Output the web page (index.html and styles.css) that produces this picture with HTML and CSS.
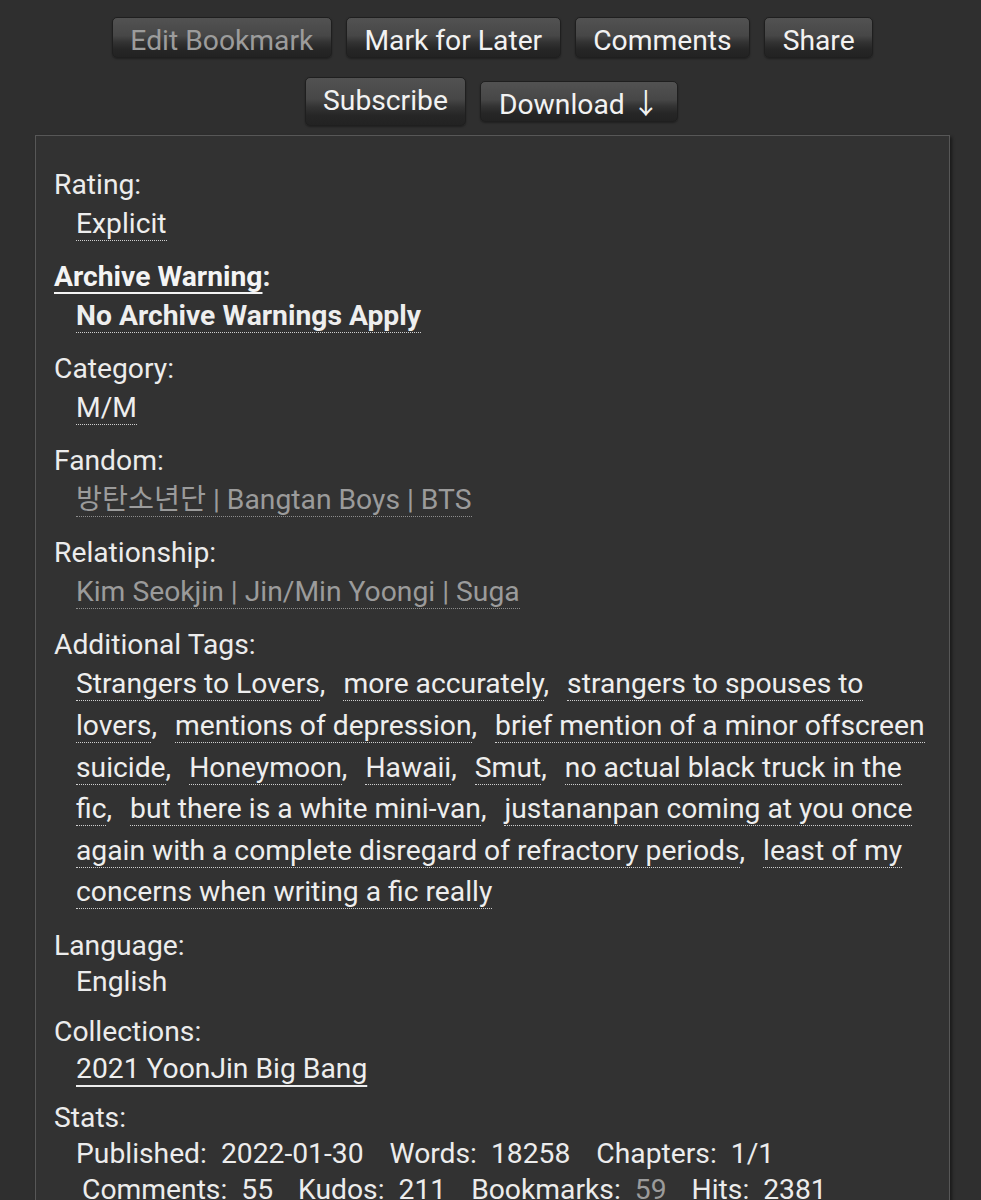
FILE: index.html
```html
<!DOCTYPE html>
<html lang="en">
<head>
<meta charset="utf-8">
<title>Work meta</title>
<link rel="stylesheet" href="styles.css">
</head>
<body>
<div class="page">
  <ul class="actions row-one">
    <li><a class="btn btn-muted">Edit Bookmark</a></li>
    <li><a class="btn">Mark for Later</a></li>
    <li><a class="btn">Comments</a></li>
    <li><a class="btn">Share</a></li>
  </ul>
  <ul class="actions row-two">
    <li><a class="btn btn-tall">Subscribe</a></li>
    <li><a class="btn">Download ↓</a></li>
  </ul>

  <div class="meta">
    <dl class="meta-list">
      <dt>Rating:</dt>
      <dd class="tagline"><ul class="tags"><li><a class="tag">Explicit</a></li></ul></dd>

      <dt class="strong"><a class="heading-link">Archive Warning</a>:</dt>
      <dd class="tagline strong"><ul class="tags"><li><a class="tag">No Archive Warnings Apply</a></li></ul></dd>

      <dt>Category:</dt>
      <dd class="tagline"><ul class="tags"><li><a class="tag">M/M</a></li></ul></dd>

      <dt>Fandom:</dt>
      <dd class="tagline"><ul class="tags"><li><a class="tag visited">방탄소년단 | Bangtan Boys | BTS</a></li></ul></dd>

      <dt>Relationship:</dt>
      <dd class="tagline"><ul class="tags"><li><a class="tag visited">Kim Seokjin | Jin/Min Yoongi | Suga</a></li></ul></dd>

      <dt>Additional Tags:</dt>
      <dd class="tagline">
        <ul class="tags commas">
          <li><a class="tag">Strangers to Lovers</a></li>
          <li><a class="tag">more accurately</a></li>
          <li><a class="tag">strangers to spouses to lovers</a></li>
          <li><a class="tag">mentions of depression</a></li>
          <li><a class="tag">brief mention of a minor offscreen suicide</a></li>
          <li><a class="tag">Honeymoon</a></li>
          <li><a class="tag">Hawaii</a></li>
          <li><a class="tag">Smut</a></li>
          <li><a class="tag">no actual black truck in the fic</a></li>
          <li><a class="tag">but there is a white mini-van</a></li>
          <li><a class="tag">justananpan coming at you once again with a complete disregard of refractory periods</a></li>
          <li><a class="tag">least of my concerns when writing a fic really</a></li>
        </ul>
      </dd>

      <dt>Language:</dt>
      <dd>English</dd>

      <dt>Collections:</dt>
      <dd class="collections"><a class="collection">2021 YoonJin Big Bang</a></dd>

      <dt>Stats:</dt>
      <dd class="stats">
        <div class="stats-line"><span class="sk">Published:</span><span class="sv">2022-01-30</span><span class="sk">Words:</span><span class="sv">18258</span><span class="sk">Chapters:</span><span class="sv">1/1</span></div>
        <div class="stats-line second"><span class="sk">Comments:</span><span class="sv">55</span><span class="sk">Kudos:</span><span class="sv">211</span><span class="sk">Bookmarks:</span><span class="sv visited">59</span><span class="sk">Hits:</span><span class="sv">2381</span></div>
      </dd>
    </dl>
  </div>
</div>
</body>
</html>
```

FILE: styles.css
```css
html, body {
  margin: 0;
  padding: 0;
}

body {
  background: #2f2f2f;
  color: #ececec;
  font-family: Roboto, "Noto Sans", "Noto Sans CJK KR", sans-serif;
  font-size: 28.25px;
  line-height: 1.286;
  height: 1200px;
  overflow: hidden;
}

.page {
  padding-top: 17px;
}

.actions {
  list-style: none;
  margin: 0;
  padding: 0;
  display: flex;
  justify-content: center;
  align-items: center;
  gap: 14px;
}

.row-one {
  padding-left: 4px;
}

.row-two {
  margin-top: 19px;
  padding-left: 2px;
}

.btn {
  display: block;
  box-sizing: border-box;
  height: 41px;
  padding: 6px 17.5px 0;
  line-height: 33px;
  color: #f2f2f2;
  border: 1px solid #1f1f1f;
  border-radius: 5px;
  background: linear-gradient(to bottom, #525252 0%, #474747 45%, #333 62%, #262626 80%, #222 100%);
  box-shadow: 0 1px 2px rgba(0, 0, 0, 0.35);
  white-space: nowrap;
}

.btn-muted {
  color: #9c9c9c;
}

.btn-tall {
  height: 49px;
}

.meta {
  margin: 9px 31px 0 35px;
  border: 1px solid #575757;
  background: #323232;
  padding: 31px 19px 0 18px;
  box-shadow: 2px 2px 3px rgba(0, 0, 0, 0.45);
  min-height: 1100px;
}

.meta-list {
  margin: 0;
}

.meta-list dt {
  margin: 0;
  line-height: 36px;
}

.meta-list dd {
  margin: 0 0 14.5px 22px;
  line-height: 36px;
}

.meta-list dd.tagline {
  line-height: 41.6px;
}

.meta-list dd.collections {
  line-height: 37px;
  margin-bottom: 13px;
}

.strong {
  font-weight: bold;
}

.heading-link {
  color: #f4f4f4;
  text-decoration: underline;
  text-decoration-thickness: 2px;
  text-underline-offset: 6px;
}

.tags {
  list-style: none;
  margin: 0;
  padding: 0;
  display: inline;
}

.tags li {
  display: inline;
}

.commas li {
  margin-right: 11px;
}

.commas li::after {
  content: ",";
}

.commas li:last-child::after {
  content: "";
}

.tag {
  color: #eeeeee;
  border-bottom: 1px dotted #cfcfcf;
}

.tag.visited {
  color: #9b9b9b;
  border-bottom-color: #8c8c8c;
}

.collection {
  color: #eeeeee;
  text-decoration: underline;
  text-decoration-thickness: 2px;
  text-underline-offset: 7px;
}

.stats-line {
  white-space: nowrap;
}

.stats-line.second {
  padding-left: 6px;
  line-height: 35px;
}

.sv {
  margin-left: 14px;
  margin-right: 26px;
}

.second .sv {
  margin-right: 25px;
}

.sv.visited {
  color: #9b9b9b;
}
```
